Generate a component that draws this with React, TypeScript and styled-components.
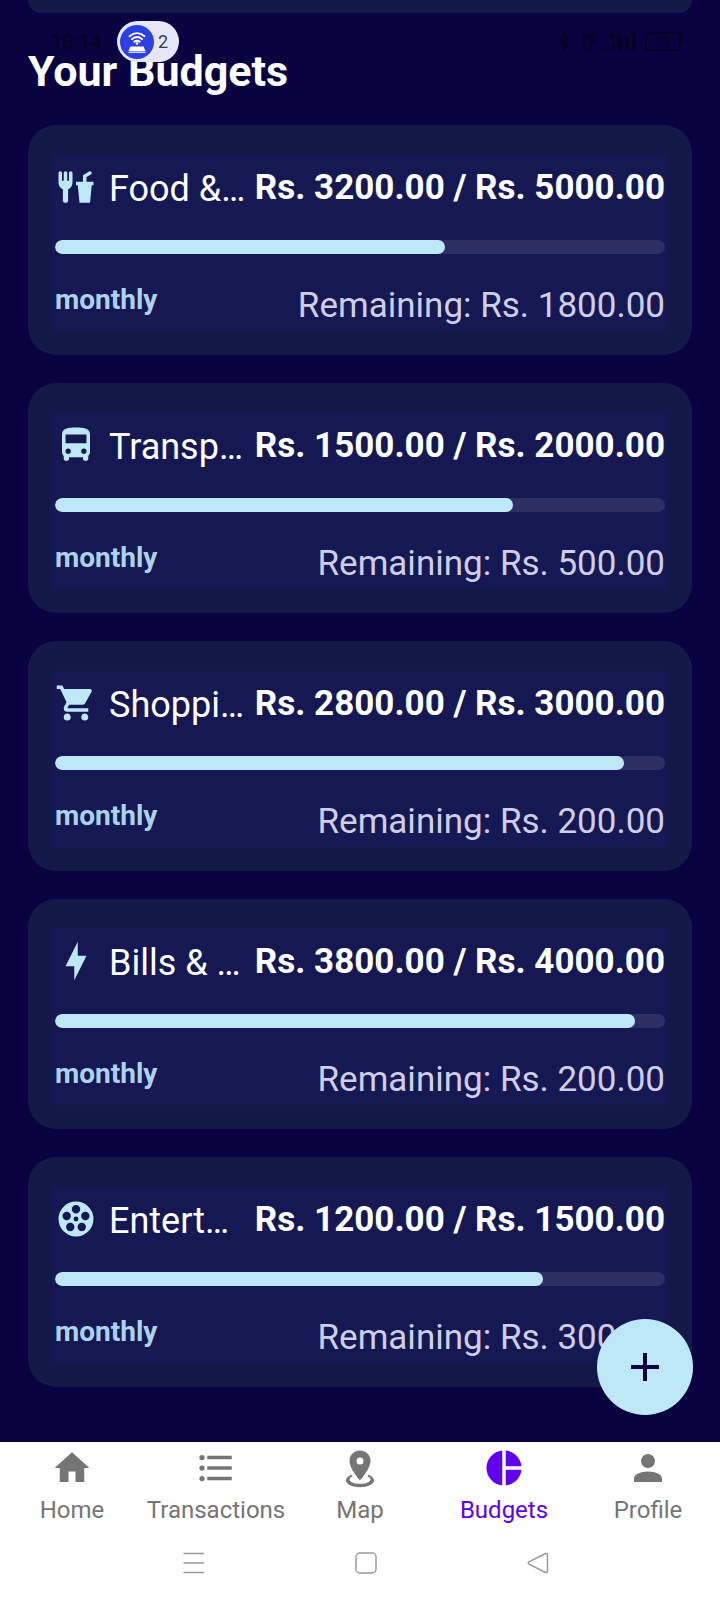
import React from 'react';
import styled, { createGlobalStyle } from 'styled-components';

const color = {
  page: '#0a0240',
  card: '#141846',
  panel: '#161853',
  track: '#2d2f63',
  accent: '#bee8f8',
  period: '#add3ec',
  muted: '#d0cee6',
  white: '#ffffff',
  status: '#040122',
  nav: '#757575',
  active: '#6200ee',
  system: '#9a9a9a',
};

const GlobalStyle = createGlobalStyle`
  *, *::before, *::after { box-sizing: border-box; }
  body {
    margin: 0;
    background: ${color.page};
    font-family: Roboto, "Liberation Sans", sans-serif;
  }
  h1, p { margin: 0; }
  button { font: inherit; border: 0; cursor: pointer; }
`;

const Screen = styled.div`
  position: relative;
  display: flex;
  flex-direction: column;
  min-height: 100vh;
`;

const StatusBar = styled.div`
  position: absolute;
  z-index: 2;
  top: 21px;
  left: 0;
  right: 0;
  display: flex;
  align-items: center;
  height: 41px;
  padding: 0 36px 0 51px;
  color: ${color.status};
`;

const Clock = styled.time`
  width: 66px;
  font-size: 20px;
  font-weight: 500;
  line-height: 28px;
`;

const HotspotPill = styled.div`
  display: flex;
  align-items: center;
  gap: 4px;
  width: 62px;
  height: 41px;
  padding: 0 3px;
  border-radius: 21px;
  background: #e6e5fa;
  color: #3c3c4c;
  font-size: 18px;
  line-height: 24px;
`;

const StatusIcons = styled.svg`
  margin-left: auto;
`;

const Main = styled.main`
  position: relative;
  flex: 1;
  padding: 0 28px 54px;
`;

const PreviousCard = styled.div`
  height: 13px;
  border-radius: 0 0 28px 28px;
  background: ${color.card};
`;

const Title = styled.h1`
  padding: 32px 0 28px;
  color: ${color.white};
  font-size: 43px;
  font-weight: 700;
  line-height: 52px;
`;

const BudgetList = styled.div`
  display: flex;
  flex-direction: column;
  gap: 28px;
`;

const Card = styled.article`
  padding: 30px 24px 24px;
  border-radius: 28px;
  background: ${color.card};
`;

const Panel = styled.div`
  padding: 11px 3px 2px;
  background: ${color.panel};
`;

const CardHeader = styled.div`
  display: flex;
  align-items: flex-start;
  height: 74px;
  color: ${color.accent};
`;

const Name = styled.p`
  flex: 1;
  margin-left: 12px;
  color: ${color.white};
  font-size: 36px;
  line-height: 46px;
  white-space: nowrap;
`;

const Amount = styled.p`
  color: ${color.white};
  font-size: 35px;
  font-weight: 700;
  line-height: 44px;
  white-space: nowrap;
`;

const Track = styled.div`
  height: 14px;
  overflow: hidden;
  border-radius: 7px;
  background: ${color.track};
`;

const Fill = styled.div`
  height: 100%;
  border-radius: 7px;
  background: ${color.accent};
`;

const CardFooter = styled.div`
  display: flex;
  align-items: flex-start;
  justify-content: space-between;
  margin-top: 29px;
`;

const Period = styled.p`
  color: ${color.period};
  font-size: 28px;
  font-weight: 700;
  line-height: 34px;
`;

const Remaining = styled.p`
  color: ${color.muted};
  font-size: 35px;
  line-height: 46px;
  white-space: nowrap;
`;

const AddButton = styled.button`
  position: absolute;
  right: 27px;
  bottom: 27px;
  display: grid;
  place-items: center;
  width: 96px;
  height: 96px;
  padding: 0;
  border-radius: 50%;
  background: ${color.accent};
  color: ${color.page};
`;

const Footer = styled.footer`
  background: ${color.white};
`;

const TabBar = styled.nav`
  display: flex;
  padding-top: 5px;
`;

const Tab = styled.a<{ $active?: boolean }>`
  display: flex;
  flex: 1;
  flex-direction: column;
  align-items: center;
  gap: 6px;
  color: ${(p) => (p.$active ? color.active : color.nav)};
  font-size: 24px;
  line-height: 30px;
  text-decoration: none;
`;

const SystemBar = styled.div`
  display: flex;
  align-items: center;
  justify-content: center;
  gap: 140px;
  height: 75px;
  padding-left: 12px;
`;

const SystemButton = styled.button`
  display: grid;
  place-items: center;
  width: 32px;
  height: 32px;
  padding: 0;
  background: none;
  color: ${color.system};
`;

const hole = (cx: number, cy: number, r: number) =>
  `M${cx - r},${cy}a${r},${r} 0 1,0 ${2 * r},0a${r},${r} 0 1,0 ${-2 * r},0Z`;

const reel = [
  hole(12, 12, 10),
  hole(12, 12, 1.4),
  ...[0, 1, 2, 3, 4].map((i) => {
    const angle = (i * 2 * Math.PI) / 5;
    return hole(12 + 5.6 * Math.sin(angle), 12 - 5.6 * Math.cos(angle), 2.4);
  }),
].join('');

const icons = {
  food: 'M3,3A1,1 0 0,0 2,4V8L2,9.5C2,11.19 3.03,12.63 4.5,13.22V19.5A1.5,1.5 0 0,0 6,21A1.5,1.5 0 0,0 7.5,19.5V13.22C8.97,12.63 10,11.19 10,9.5V8L10,4A1,1 0 0,0 9,3A1,1 0 0,0 8,4V8A0.5,0.5 0 0,1 7.5,8.5A0.5,0.5 0 0,1 7,8V4A1,1 0 0,0 6,3A1,1 0 0,0 5,4V8A0.5,0.5 0 0,1 4.5,8.5A0.5,0.5 0 0,1 4,8V4A1,1 0 0,0 3,3M19.88,3C19.75,3 19.62,3.09 19.5,3.16L16,5.25V9H12V11H13L14,21H20L21,11H22V9H18V6.34L20.5,4.84C21,4.56 21.13,4 20.84,3.5C20.63,3.14 20.26,2.95 19.88,3Z',
  bus: 'M18,11H6V6H18M16.5,17A1.5,1.5 0 0,1 15,15.5A1.5,1.5 0 0,1 16.5,14A1.5,1.5 0 0,1 18,15.5A1.5,1.5 0 0,1 16.5,17M7.5,17A1.5,1.5 0 0,1 6,15.5A1.5,1.5 0 0,1 7.5,14A1.5,1.5 0 0,1 9,15.5A1.5,1.5 0 0,1 7.5,17M4,16C4,16.88 4.39,17.67 5,18.22V20A1,1 0 0,0 6,21H7A1,1 0 0,0 8,20V19H16V20A1,1 0 0,0 17,21H18A1,1 0 0,0 19,20V18.22C19.61,17.67 20,16.88 20,16V6C20,2.5 16.42,2 12,2C7.58,2 4,2.5 4,6V16Z',
  cart: 'M17,18C15.89,18 15,18.89 15,20A2,2 0 0,0 17,22A2,2 0 0,0 19,20C19,18.89 18.1,18 17,18M1,2V4H3L6.6,11.59L5.24,14.04C5.09,14.32 5,14.65 5,15A2,2 0 0,0 7,17H19V15H7.42A0.25,0.25 0 0,1 7.17,14.75C7.17,14.7 7.18,14.66 7.2,14.63L8.1,13H15.55C16.3,13 16.96,12.58 17.3,11.97L20.88,5.5C20.95,5.34 21,5.17 21,5A1,1 0 0,0 20,4H5.21L4.27,2M7,18C5.89,18 5,18.89 5,20A2,2 0 0,0 7,22A2,2 0 0,0 9,20C9,18.89 8.1,18 7,18Z',
  bolt: 'M11 15H6L13 1V9H18L11 23V15Z',
  reel,
  home: 'M10,20V14H14V20H19V12H22L12,3L2,12H5V20H10Z',
  list: 'M7,5H21V7H7V5M7,13V11H21V13H7M4,4.5A1.5,1.5 0 0,1 5.5,6A1.5,1.5 0 0,1 4,7.5A1.5,1.5 0 0,1 2.5,6A1.5,1.5 0 0,1 4,4.5M4,10.5A1.5,1.5 0 0,1 5.5,12A1.5,1.5 0 0,1 4,13.5A1.5,1.5 0 0,1 2.5,12A1.5,1.5 0 0,1 4,10.5M7,19V17H21V19H7M4,16.5A1.5,1.5 0 0,1 5.5,18A1.5,1.5 0 0,1 4,19.5A1.5,1.5 0 0,1 2.5,18A1.5,1.5 0 0,1 4,16.5Z',
  map: 'M12,2C15.31,2 18,4.66 18,7.95C18,12.41 12,19 12,19C12,19 6,12.41 6,7.95C6,4.66 8.69,2 12,2M12,6A2,2 0 0,0 10,8A2,2 0 0,0 12,10A2,2 0 0,0 14,8A2,2 0 0,0 12,6M20,19C20,21.21 16.42,23 12,23C7.58,23 4,21.21 4,19C4,17.71 5.22,16.56 7.11,15.83L7.75,16.74C6.67,17.19 6,17.81 6,18.5C6,19.88 8.69,21 12,21C15.31,21 18,19.88 18,18.5C18,17.81 17.33,17.19 16.25,16.74L16.89,15.83C18.78,16.56 20,17.71 20,19Z',
  pie: 'M11,2V22C5.9,21.5 2,17.2 2,12C2,6.8 5.9,2.5 11,2M13,2V11H22C21.5,6.2 17.8,2.5 13,2M13,13V22C17.7,21.5 21.5,17.8 22,13H13Z',
  account: 'M12,4A4,4 0 0,1 16,8A4,4 0 0,1 12,12A4,4 0 0,1 8,8A4,4 0 0,1 12,4M12,14C16.42,14 20,15.79 20,18V20H4V18C4,15.79 7.58,14 12,14Z',
  plus: 'M19,13H13V19H11V13H5V11H11V5H13V11H19V13Z',
};

type IconName = keyof typeof icons;

const IconSvg = styled.svg`
  flex: none;
  display: block;
  fill: currentColor;
  fill-rule: evenodd;
`;

const Icon = ({ name, size = 42 }: { name: IconName; size?: number }) => (
  <IconSvg width={size} height={size} viewBox="0 0 24 24" aria-hidden="true">
    <path d={icons[name]} />
  </IconSvg>
);

const budgets: { name: string; icon: IconName; spent: number; limit: number }[] = [
  { name: 'Food &…', icon: 'food', spent: 3200, limit: 5000 },
  { name: 'Transp…', icon: 'bus', spent: 1500, limit: 2000 },
  { name: 'Shoppi…', icon: 'cart', spent: 2800, limit: 3000 },
  { name: 'Bills & …', icon: 'bolt', spent: 3800, limit: 4000 },
  { name: 'Entert…', icon: 'reel', spent: 1200, limit: 1500 },
];

const tabs: { label: string; icon: IconName; active?: boolean }[] = [
  { label: 'Home', icon: 'home' },
  { label: 'Transactions', icon: 'list' },
  { label: 'Map', icon: 'map' },
  { label: 'Budgets', icon: 'pie', active: true },
  { label: 'Profile', icon: 'account' },
];

const rupees = (value: number) => `Rs. ${value.toFixed(2)}`;

export default function App() {
  return (
    <Screen>
      <GlobalStyle />
      <StatusBar>
        <Clock>18:14</Clock>
        <HotspotPill>
          <svg width="34" height="34" viewBox="0 0 34 34" aria-hidden="true">
            <circle cx="17" cy="17" r="17" fill="#2c40e4" />
            <g fill="none" stroke="#fff" strokeWidth="1.8" strokeLinecap="round">
              <path d="M9.5 11.2Q17 5 24.5 11.2" />
              <path d="M11.8 14.2Q17 9.8 22.2 14.2" />
              <path d="M14.2 16.8Q17 14.6 19.8 16.8" />
            </g>
            <circle cx="17" cy="18.6" r="1.3" fill="#fff" />
            <path d="M10.5 21.5H23.5L25.5 26H8.5Z" fill="#fff" />
            <path d="M8.5 27.2H25.5" stroke="#fff" strokeWidth="1.2" />
          </svg>
          <span>2</span>
        </HotspotPill>
        <StatusIcons width="126" height="24" viewBox="0 0 126 24" aria-hidden="true">
          <g fill="none" stroke="currentColor" strokeWidth="2">
            <path d="M2 7L10 16L6 20V3L10 7L2 16" />
            <path d="M25 3L28 10L30 3M32 5H36V10H32ZM26 13V20H30M33 13V20M31 13H37" />
            <path d="M54 3L52 8H57M56 3V11M64 4H60V10H64V7" />
            <path d="M91 3H119Q122 3 122 6V17Q122 20 119 20H91Q88 20 88 17V6Q88 3 91 3Z" />
            <path d="M124 9V15" />
          </g>
          <path
            fill="currentColor"
            d="M46 17H49V20H46ZM54 14H57V20H54ZM60 12H64V20H60ZM67 7H71V20H67ZM74 3H78V20H74Z"
          />
          <text x="97" y="17" fontSize="14" fill="currentColor">
            79
          </text>
        </StatusIcons>
      </StatusBar>

      <Main>
        <PreviousCard />
        <Title>Your Budgets</Title>
        <BudgetList>
          {budgets.map((b) => (
            <Card key={b.name}>
              <Panel>
                <CardHeader>
                  <Icon name={b.icon} />
                  <Name>{b.name}</Name>
                  <Amount>
                    {rupees(b.spent)} / {rupees(b.limit)}
                  </Amount>
                </CardHeader>
                <Track
                  role="progressbar"
                  aria-label={b.name}
                  aria-valuenow={b.spent}
                  aria-valuemin={0}
                  aria-valuemax={b.limit}
                >
                  <Fill style={{ width: `${(b.spent / b.limit) * 100}%` }} />
                </Track>
                <CardFooter>
                  <Period>monthly</Period>
                  <Remaining>Remaining: {rupees(b.limit - b.spent)}</Remaining>
                </CardFooter>
              </Panel>
            </Card>
          ))}
        </BudgetList>
        <AddButton aria-label="Add budget">
          <Icon name="plus" size={48} />
        </AddButton>
      </Main>

      <Footer>
        <TabBar>
          {tabs.map((t) => (
            <Tab
              key={t.label}
              href={`#${t.label.toLowerCase()}`}
              $active={t.active}
              aria-current={t.active ? 'page' : undefined}
            >
              <Icon name={t.icon} />
              {t.label}
            </Tab>
          ))}
        </TabBar>
        <SystemBar>
          <SystemButton aria-label="Recent apps">
            <svg width="22" height="22" viewBox="0 0 22 22" stroke="currentColor" strokeWidth="1.5">
              <path d="M0.5 1.5H21M0.5 11H21M0.5 20.5H21" />
            </svg>
          </SystemButton>
          <SystemButton aria-label="Home screen">
            <svg width="22" height="22" viewBox="0 0 22 22" fill="none" stroke="currentColor" strokeWidth="1.5">
              <rect x="1" y="1" width="20" height="20" rx="4" />
            </svg>
          </SystemButton>
          <SystemButton aria-label="Back">
            <svg width="22" height="22" viewBox="0 0 22 22" fill="none" stroke="currentColor" strokeWidth="1.5">
              <path d="M18.5 1.5L2 9.8Q0.5 11 2 12.2L18.5 20.5Q20.5 21 20.5 19V3Q20.5 1 18.5 1.5Z" />
            </svg>
          </SystemButton>
        </SystemBar>
      </Footer>
    </Screen>
  );
}
